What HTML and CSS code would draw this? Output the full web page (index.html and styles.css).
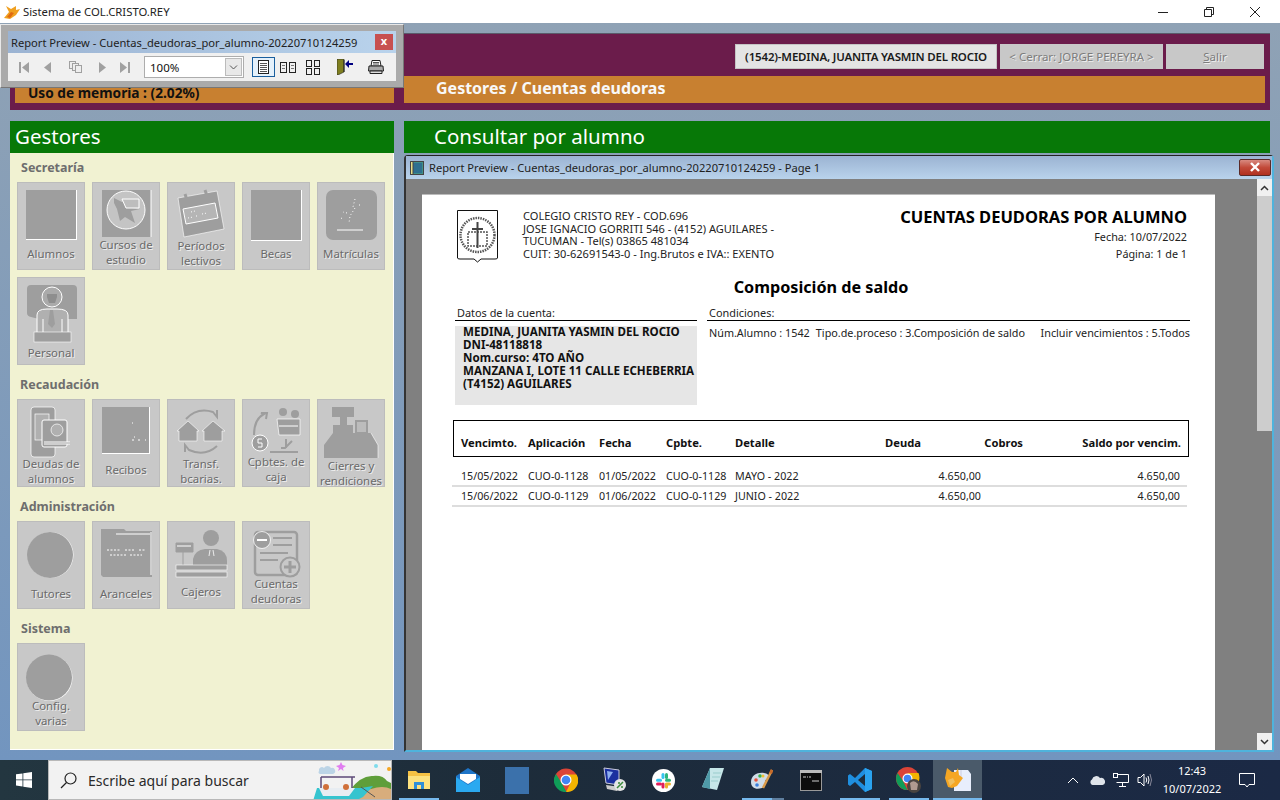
FILE: index.html
```html
<!DOCTYPE html>
<html lang="es">
<head>
<meta charset="UTF-8">
<title>Sistema de COL.CRISTO.REY</title>
<link rel="stylesheet" href="styles.css">
</head>

<body>
  <!-- ============  Window title bar  ============ -->
  <header class="titlebar">
    <svg class="app-icon" width="18" height="18" viewBox="0 0 18 18">
      <path d="M1 15 L6 9 L3 3 L8 6 L13 3 L13 7 L17 6 L13 12 L7 16 Z" fill="#f0a020"/>
      <path d="M4 14 L8 9 L11 10 L7 15 Z" fill="#e06a10"/>
    </svg>
    <span class="app-title">Sistema de COL.CRISTO.REY</span>
    <div class="win-controls">
      <svg width="12" height="12" viewBox="0 0 12 12"><path d="M1 6.5H11" stroke="#222" fill="none"/></svg>
      <svg width="12" height="12" viewBox="0 0 12 12"><path d="M1.5 3.5H8.5V10.5H1.5ZM3.5 3.5V1.5H10.5V8.5H8.5" stroke="#222" fill="none"/></svg>
      <svg width="12" height="12" viewBox="0 0 12 12"><path d="M1 1L11 11M11 1L1 11" stroke="#222" fill="none"/></svg>
    </div>
  </header>

  <!-- ============  Application  ============ -->
  <main class="desktop">
    <section class="top-band">
      <div class="top-buttons">
        <div class="btn btn-user">(1542)-MEDINA, JUANITA YASMIN DEL ROCIO</div>
        <div class="btn btn-close">&lt; Cerrar: JORGE PEREYRA &gt;</div>
        <div class="btn btn-exit"><u>S</u>alir</div>
      </div>
      <div class="top-strips">
        <div class="strip strip-mem">Uso de memoria : (2.02%)</div>
        <div class="strip strip-path">Gestores / Cuentas deudoras</div>
      </div>
    </section>

    <div class="columns">
      <!-- gestores menu -->
      <aside class="menu">
        <h2 class="green-head">Gestores</h2>
        <div class="menu-body">
          <h3 class="group g-sec">Secretaría</h3>
          <div class="tiles">
            <div class="tile">
              <svg width="68" height="64" viewBox="0 0 68 64"><rect x="9" y="8" width="51" height="50" fill="#fff"/><rect x="9" y="8" width="50" height="49" fill="#9e9e9e"/></svg>
              <span>Alumnos</span>
            </div>
            <div class="tile">
              <svg width="68" height="55" viewBox="0 0 68 55"><rect x="10" y="8" width="49" height="47" fill="#9e9e9e"/><path d="M59 8V55" stroke="#fff"/><circle cx="34" cy="28" r="19" fill="#c4c4c4" stroke="#fff"/><path d="M22 16l8 4 8-2 2 8 8 1-9 2 4 12-10-6-5 4-3-12-3-6z" fill="#9e9e9e"/><path d="M30 17h17v9H34z" fill="#bdbdbd" stroke="#fff"/></svg>
              <span>Cursos de<br>estudio</span>
            </div>
            <div class="tile">
              <svg width="68" height="56" viewBox="0 0 68 56"><path d="M11 16L50 9L57 47L17 55Z" fill="#9e9e9e" stroke="#fff" stroke-width=".6"/><path d="M18 12l2 6M38 8l2 6" stroke="#9e9e9e" stroke-width="3"/><path d="M16 27L48 21L51 36L19 42Z" fill="#b5b5b5" stroke="#fff"/><path d="M21 36l5-1M29 34l3 0M35 32l5-1M24 30l4-1" stroke="#fff" stroke-dasharray="1 2"/></svg>
              <span>Períodos<br>lectivos</span>
            </div>
            <div class="tile">
              <svg width="68" height="64" viewBox="0 0 68 64"><rect x="9" y="8" width="51" height="51" fill="#fff"/><rect x="9" y="8" width="50" height="50" fill="#9e9e9e"/></svg>
              <span>Becas</span>
            </div>
            <div class="tile">
              <svg width="68" height="64" viewBox="0 0 68 64"><rect x="9" y="8" width="51" height="50" rx="7" fill="#9e9e9e"/><path d="M20 48H46" stroke="#fff"/><path d="M38 17l-2 8 2 1-5 8-1 7M30 31l-4 -1M42 23l2 0M24 36l2 1" stroke="#fff" stroke-dasharray="1 2.5" fill="none"/></svg>
              <span>Matrículas</span>
            </div>
            <div class="tile">
              <svg width="68" height="68" viewBox="0 0 68 68"><path d="M14 8H56Q60 8 60 12V42L50 42H22L14 40Q10 39 10 36V12Q10 8 14 8Z" fill="#9e9e9e"/><circle cx="35" cy="20" r="10" fill="#aaa" stroke="#fff"/><path d="M30 17h10v3l-2 6h-6l-2-6z" fill="#8e8e8e"/><path d="M20 55V38Q20 32 30 32H40Q51 32 51 38V55" fill="#b0b0b0" stroke="#fff"/><path d="M33 33l-2 14 4 4 3-4-2-14z" fill="#9e9e9e"/><path d="M26 42v13M45 42v13" stroke="#fff"/><rect x="17" y="55" width="37" height="10" fill="#9e9e9e" stroke="#fff" stroke-width=".6"/></svg>
              <span>Personal</span>
            </div>
          </div>

          <h3 class="group g-rec">Recaudación</h3>
          <div class="tiles">
            <div class="tile">
              <svg width="68" height="57" viewBox="0 0 68 57" fill="none"><rect x="14" y="8" width="24" height="50" rx="3" fill="#9e9e9e" stroke="#fff" stroke-width=".7"/><rect x="18" y="15" width="14" height="26" fill="#b0b0b0" stroke="#fff" stroke-width=".7"/><rect x="25" y="21" width="25" height="27" rx="2" fill="#9e9e9e" stroke="#fff"/><circle cx="40" cy="31" r="6" fill="#b0b0b0" stroke="#fff" stroke-width=".7"/><path d="M27 44H53" stroke="#fff" stroke-width="3"/><path d="M27 44H53" stroke="#9e9e9e"/></svg>
              <span>Deudas de<br>alumnos</span>
            </div>
            <div class="tile">
              <svg width="68" height="63" viewBox="0 0 68 63"><rect x="10" y="8" width="48" height="47" fill="#fff"/><rect x="10" y="8" width="47" height="46" fill="#9e9e9e"/><path d="M40 24h1M42 38h1M40 41h2M46 41h2M53 41h1" stroke="#fff"/></svg>
              <span>Recibos</span>
            </div>
            <div class="tile">
              <svg width="68" height="57" viewBox="0 0 68 57"><path d="M19 20Q30 8 46 13l4 5v-7" fill="none" stroke="#9e9e9e" stroke-width="2"/><path d="M50 47Q38 58 22 51l-4-5v7" fill="none" stroke="#9e9e9e" stroke-width="2"/><path d="M10 32L21 22L32 32H30V42H12V32Z" fill="#9e9e9e" stroke="#fff" stroke-width=".6"/><path d="M35 32L46 22L58 32H55V42H37V32Z" fill="#9e9e9e" stroke="#fff" stroke-width=".6"/></svg>
              <span>Transf.<br>bcarias.</span>
            </div>
            <div class="tile">
              <svg width="68" height="55" viewBox="0 0 68 55" fill="none"><path d="M12 36Q12 20 22 15l-3 -1h6l-1 6" stroke="#9e9e9e" stroke-width="2"/><circle cx="18" cy="44" r="8" fill="#9e9e9e" stroke="#fff"/><path d="M20 40h-4v4h4v4h-4" stroke="#fff"/><circle cx="41" cy="13" r="4" fill="#9e9e9e"/><circle cx="53" cy="15" r="4" fill="#9e9e9e"/><path d="M35 20H58V36H37Z" fill="#9e9e9e" stroke="#fff" stroke-width=".7"/><path d="M37 27H56" stroke="#fff"/><path d="M50 42l-7 7h-4M44 40v9" stroke="#9e9e9e" stroke-width="2"/><path d="M28 53H56" stroke="#9e9e9e" stroke-width="2"/></svg>
              <span>Cpbtes. de<br>caja</span>
            </div>
            <div class="tile">
              <svg width="68" height="59" viewBox="0 0 68 59"><path d="M15 8H37V18H30V26H36V34H54L61 46V59H7V46L16 34V26H23V18H15Z" fill="#9e9e9e"/><rect x="39" y="22" width="11" height="12" fill="#bcbcbc" stroke="#9e9e9e" stroke-width="2"/><path d="M54 34L61 46V59" fill="none" stroke="#fff" stroke-width=".6"/></svg>
              <span>Cierres y<br>rendiciones</span>
            </div>
          </div>

          <h3 class="group g-adm">Administración</h3>
          <div class="tiles">
            <div class="tile">
              <svg width="68" height="65" viewBox="0 0 68 65"><circle cx="33.5" cy="34" r="23" fill="#fff"/><circle cx="33" cy="34" r="23" fill="#9e9e9e"/></svg>
              <span>Tutores</span>
            </div>
            <div class="tile">
              <svg width="68" height="65" viewBox="0 0 68 65"><path d="M9 8H32L34 10H60V56H11L9 54Z" fill="#9e9e9e"/><path d="M24 13H58M59 11V54" stroke="#fff"/><path d="M15 29H29M33 29H42M47 29H54M18 34H34M38 34H50" stroke="#fff" stroke-dasharray="2 1.5"/></svg>
              <span>Aranceles</span>
            </div>
            <div class="tile">
              <svg width="68" height="63" viewBox="0 0 68 63"><circle cx="44" cy="17" r="8" fill="#9e9e9e"/><path d="M26 44V38Q28 29 38 28H50Q60 30 60 40V44Z" fill="#9e9e9e"/><path d="M43 29l-1 6M46 29l1 6" stroke="#fff" stroke-width=".8"/><path d="M9 22H26V31H9ZM16 31V44" fill="#9e9e9e" stroke="#9e9e9e"/><path d="M10 25H24" stroke="#fff"/><rect x="9" y="44" width="51" height="5" fill="#9e9e9e" stroke="#fff" stroke-width=".6"/><rect x="9" y="51" width="51" height="5" fill="#9e9e9e" stroke="#fff" stroke-width=".6"/></svg>
              <span>Cajeros</span>
            </div>
            <div class="tile">
              <svg width="68" height="55" viewBox="0 0 68 55" fill="none"><rect x="13" y="11" width="42" height="43" rx="3" stroke="#9e9e9e" stroke-width="2.5"/><circle cx="20" cy="19" r="8.5" fill="#9e9e9e" stroke="#fff" stroke-width=".8"/><path d="M15 19H25" stroke="#fff" stroke-width="2"/><path d="M31 17H50M31 24H50M18 32H46M18 39H36" stroke="#9e9e9e" stroke-width="2"/><circle cx="48" cy="46" r="9.5" fill="#c8c8c8" stroke="#9e9e9e" stroke-width="2"/><path d="M42 46H54M48 40V52" stroke="#9e9e9e" stroke-width="3"/></svg>
              <span>Cuentas<br>deudoras</span>
            </div>
          </div>

          <h3 class="group g-sis">Sistema</h3>
          <div class="tiles">
            <div class="tile">
              <svg width="68" height="55" viewBox="0 0 68 55"><circle cx="32.5" cy="35" r="23" fill="#fff"/><circle cx="32" cy="34.500" r="23" fill="#9e9e9e"/></svg>
              <span>Config.<br>varias</span>
            </div>
          </div>
        </div>
      </aside>

      <div class="consult">
        <h2 class="green-head consult-head">Consultar por alumno</h2>
      </div>
    </div>
  </main>

  <!-- ============  Report window (page)  ============ -->
  <section class="report-win">
    <div class="report-title">
      <svg width="14" height="14" viewBox="0 0 14 14"><rect x=".5" y=".5" width="13" height="13" fill="#3f8f88" stroke="#444"/><rect x="3" y="2" width="9" height="10" fill="#2e6f8f"/><path d="M.5 .5H3V13.500H.5Z" fill="#e6e08a" stroke="#444"/></svg>
      <span>Report Preview - Cuentas_deudoras_por_alumno-20220710124259 - Page 1</span>
      <div class="report-close">
        <svg width="14" height="10" viewBox="0 0 14 10"><path d="M3 1L11 9M11 1L3 9" stroke="#fff" stroke-width="2.400"/></svg>
      </div>
    </div>
    <div class="report-client">
      <div class="page">
        <div class="page-head">
          <svg class="crest" width="42" height="53" viewBox="0 0 42 53" fill="none">
            <path d="M.5 .5H40.500V48Q40.500 49 38 49H24L20.500 52L17 49H3Q.5 49 .5 48Z" fill="#fff" stroke="#111"/>
            <circle cx="20.500" cy="25" r="17" stroke="#555" stroke-width="2.500" stroke-dasharray="1.500 1"/>
            <rect x="11" y="22" width="19" height="14" stroke="#555" stroke-width="1.500" stroke-dasharray="2 1"/>
            <path d="M20.500 12V38M15 19H26" stroke="#444" stroke-width="2"/>
          </svg>
          <div class="school">
            COLEGIO CRISTO REY - COD.696<br>
            JOSE IGNACIO GORRITI 546 - (4152) AGUILARES -<br>
            TUCUMAN - Tel(s) 03865 481034<br>
            CUIT: 30-62691543-0 - Ing.Brutos e IVA:: EXENTO
          </div>
          <div class="doc-info">
            <div class="doc-title">CUENTAS DEUDORAS POR ALUMNO</div>
            <div class="doc-date">Fecha: 10/07/2022</div>
            <div class="doc-num">Página: 1 de 1</div>
          </div>
        </div>

        <div class="doc-sub">Composición de saldo</div>

        <div class="data-cols">
          <div class="data-left">
            <div class="data-label">Datos de la cuenta:</div>
            <div class="account">
              MEDINA, JUANITA YASMIN DEL ROCIO<br>
              DNI-48118818<br>
              Nom.curso: 4TO AÑO<br>
              MANZANA I, LOTE 11 CALLE ECHEBERRIA<br>
              (T4152) AGUILARES
            </div>
          </div>
          <div class="data-right">
            <div class="data-label">Condiciones:</div>
            <div class="conds">
              <span>Núm.Alumno : 1542</span>
              <span>Tipo.de.proceso : 3.Composición de saldo</span>
              <span>Incluir vencimientos : 5.Todos</span>
            </div>
          </div>
        </div>

        <div class="t-head">
          <span>Vencimto.</span><span>Aplicación</span><span>Fecha</span><span>Cpbte.</span><span>Detalle</span>
          <span class="num">Deuda</span><span class="num">Cobros</span><span class="num">Saldo por vencim.</span>
        </div>
        <div class="t-row first">
          <span>15/05/2022</span><span>CUO-0-1128</span><span>01/05/2022</span><span>CUO-0-1128</span><span>MAYO - 2022</span>
          <span class="num">4.650,00</span><span class="num"></span><span class="num">4.650,00</span>
        </div>
        <div class="t-row">
          <span>15/06/2022</span><span>CUO-0-1129</span><span>01/06/2022</span><span>CUO-0-1129</span><span>JUNIO - 2022</span>
          <span class="num">4.650,00</span><span class="num"></span><span class="num">4.650,00</span>
        </div>
      </div>
      <div class="vscroll">
        <div class="arrow"><svg width="9" height="6" viewBox="0 0 9 6"><path d="M1 5L4.500 1.500L8 5" stroke="#333" stroke-width="1.500" fill="none"/></svg></div>
        <div class="thumb"></div>
        <div class="track"></div>
        <div class="arrow"><svg width="9" height="6" viewBox="0 0 9 6"><path d="M1 1L4.500 4.500L8 1" stroke="#333" stroke-width="1.500" fill="none"/></svg></div>
      </div>
    </div>
  </section>

  <!-- ============  Floating toolbar window  ============ -->
  <section class="tool-win">
    <div class="tool-title">
      <span>Report Preview - Cuentas_deudoras_por_alumno-20220710124259</span>
      <div class="tool-close">x</div>
    </div>
    <div class="tool-bar">
      <svg class="t-first" width="10" height="11" viewBox="0 0 10 11"><path d="M0 0H2V11H0ZM10 0V11L3 5.500Z" fill="#a0a0a0"/></svg>
      <svg class="t-prev" width="7" height="11" viewBox="0 0 7 11"><path d="M7 0V11L0 5.500Z" fill="#a0a0a0"/></svg>
      <svg class="t-pages" width="13" height="12" viewBox="0 0 13 12" fill="#eee" stroke="#a0a0a0"><rect x=".5" y=".5" width="6" height="7"/><rect x="3.500" y="2.500" width="6" height="7"/><rect x="6.500" y="4.500" width="6" height="7"/></svg>
      <svg class="t-next" width="7" height="11" viewBox="0 0 7 11"><path d="M0 0V11L7 5.500Z" fill="#a0a0a0"/></svg>
      <svg class="t-last" width="10" height="11" viewBox="0 0 10 11"><path d="M8 0H10V11H8ZM0 0V11L7 5.500Z" fill="#a0a0a0"/></svg>
      <div class="combo">
        <span>100%</span>
        <div class="combo-btn"><svg width="9" height="5" viewBox="0 0 9 5"><path d="M1 .5L4.500 4L8 .5" stroke="#555" fill="none"/></svg></div>
      </div>
      <div class="view-on">
        <svg width="11" height="14" viewBox="0 0 11 14" fill="none" stroke="#222"><rect x=".5" y=".5" width="10" height="13" fill="#fff"/><path d="M2 3.500H9M2 5.500H9M2 7.500H9M2 9.500H9M2 11.500H9" stroke="#555"/></svg>
      </div>
      <svg class="t-two" width="16" height="11" viewBox="0 0 16 11" fill="none" stroke="#222"><rect x=".5" y=".5" width="6" height="10"/><rect x="9.500" y=".5" width="6" height="10"/><path d="M2 3.500H5M2 6.500H5M11 3.500H14M11 6.500H14" stroke="#777"/></svg>
      <svg class="t-four" width="14" height="15" viewBox="0 0 14 15" fill="none" stroke="#222"><rect x=".5" y=".5" width="5" height="6"/><rect x="8.500" y=".5" width="5" height="6"/><rect x=".5" y="8.500" width="5" height="6"/><rect x="8.500" y="8.500" width="5" height="6"/></svg>
      <svg class="t-exit" width="16" height="16" viewBox="0 0 16 16"><path d="M0 0H7V13L1 16H0Z" fill="#7f7f20" stroke="#222" stroke-width=".6"/><path d="M7 1V13" stroke="#222"/><path d="M16 4H12V1L8 5L12 9V6H16Z" fill="#000080"/></svg>
      <svg class="t-print" width="16" height="14" viewBox="0 0 16 14"><path d="M4 .5H12L13 6H3Z" fill="#fff" stroke="#222"/><path d="M1 6H15L15.500 11H.5Z" fill="#aaa" stroke="#222"/><path d="M2 11H14V13.500H2Z" fill="#ddd" stroke="#222"/><path d="M5 2.500H11M5 4H11" stroke="#555"/></svg>
    </div>
  </section>

  <!-- ============  Windows taskbar  ============ -->
  <footer class="taskbar">
    <div class="start">
      <svg width="16" height="16" viewBox="0 0 16 16" fill="#fff"><path d="M0 2.300L6.500 1.400V7.500H0ZM7.300 1.300L16 0V7.500H7.300ZM0 8.300H6.500V14.500L0 13.600ZM7.300 8.300H16V16L7.300 14.700Z"/></svg>
    </div>
    <div class="search">
      <svg width="17" height="17" viewBox="0 0 17 17" fill="none" stroke="#222" stroke-width="1.200"><circle cx="10.500" cy="6.500" r="5.500"/><path d="M6.500 10.500L1 16"/></svg>
      <span>Escribe aquí para buscar</span>
      <svg class="doodle" width="80" height="40" viewBox="0 0 80 40">
        <path d="M8 10a3 3 0 0 1 5-3a4 4 0 0 1 7 0a3 3 0 0 1 2 6H9a2 2 0 0 1-1-3Z" fill="#bcd4e6"/>
        <path d="M30 1l1.500 3 3.500 1-3 2 .5 3-2.500-2-3 2 1-3-3-2 3.500-1Z" fill="#e07df0"/>
        <circle cx="65" cy="5" r="2" fill="#7fdcec"/><circle cx="78" cy="8" r="2" fill="#f5a623"/>
        <path d="M38 30Q50 14 62 15Q72 14 76 20L80 22V40H30Z" fill="#5f9e3a"/>
        <path d="M24 40Q50 30 60 28Q72 24 80 28V40Z" fill="#d8ad7c"/>
        <path d="M2 40L6 27H50L62 25L52 36L44 40Z" fill="#35c4cf"/>
        <path d="M8 27H44L38 35H12Z" fill="#e8edf2"/>
        <path d="M10 16H44M10 16V27M41 16V27" stroke="#5d4a78" stroke-width="1.500" fill="none"/>
        <circle cx="15" cy="26" r="3" fill="#d0703a"/><circle cx="35" cy="26" r="3" fill="#d0703a"/>
        <path d="M50 26L64 36" stroke="#555" stroke-width="1"/>
      </svg>
    </div>
    <div class="task-icons">
      <div class="ti run">
        <svg width="22" height="20" viewBox="0 0 22 20"><path d="M0 1H8L10 3H22V19H0Z" fill="#f6c244"/><path d="M0 6H22V19H0Z" fill="#fde27f"/><path d="M6 19V12H16V19Z" fill="#2f8fd8"/><path d="M9 19V15H13V19Z" fill="#fde27f"/></svg>
      </div>
      <div class="ti">
        <svg width="24" height="24" viewBox="0 0 24 24"><path d="M0 8L12 0L24 8V24H0Z" fill="#1e75c8"/><path d="M0 9L12 17L24 9V24H0Z" fill="#2ba9f0"/><path d="M4 6H20V11L12 16L4 11Z" fill="#fff"/></svg>
      </div>
      <div class="ti"><div class="blue-sq"></div></div>
      <div class="ti">
        <svg width="24" height="24" viewBox="0 0 24 24"><circle cx="12" cy="12" r="11.500" fill="#db4437"/><path d="M12 24A11.500 11.500 0 0 1 2 6L7 14L12 23Z" fill="#0f9d58"/><path d="M12 6.500H22.500A11.500 11.500 0 0 1 12 24L17 14Z" fill="#f4b400"/><circle cx="12" cy="12" r="5.500" fill="#fff"/><circle cx="12" cy="12" r="4.300" fill="#4285f4"/></svg>
      </div>
      <div class="ti">
        <svg width="24" height="26" viewBox="0 0 24 26"><path d="M1 1L16 3V18L3 16Z" fill="#1a2fa0" stroke="#ccd" /><path d="M4 4L10 5L5 13Z" fill="#8fb0f0"/><path d="M3 18L17 20L14 24L4 22Z" fill="#ccc"/><circle cx="17" cy="18" r="6" fill="#e6e6e6"/><path d="M14 21L20 15M15 16h2M18 20h2" stroke="#3a8a3a" stroke-width="1.500"/></svg>
      </div>
      <div class="ti">
        <svg width="23" height="23" viewBox="0 0 23 23"><circle cx="11.500" cy="11.500" r="11.500" fill="#fff"/><rect x="9.500" y="4" width="3" height="6" rx="1.500" fill="#36c5f0"/><rect x="4" y="9.800" width="6" height="3" rx="1.500" fill="#36c5f0"/><rect x="13" y="4" width="3" height="6" rx="1.500" fill="#2eb67d"/><rect x="13" y="9.800" width="6" height="3" rx="1.500" fill="#2eb67d"/><rect x="4" y="13.500" width="6" height="3" rx="1.500" fill="#e01e5a"/><rect x="9.500" y="13.500" width="3" height="6" rx="1.500" fill="#e01e5a"/><rect x="13" y="13.500" width="6" height="3" rx="1.500" fill="#ecb22e"/><rect x="13" y="14" width="3" height="5.500" rx="1.500" fill="#ecb22e"/></svg>
      </div>
      <div class="ti">
        <svg width="22" height="26" viewBox="0 0 22 26"><path d="M8 1H22L15 23L0 20Z" fill="#c6e6e8"/><path d="M8 1L0 20L8 22Z" fill="#4f9aa8"/><path d="M11 6H19M10 10H18M9 14H16" stroke="#9cc" /></svg>
      </div>
      <div class="ti run-split">
        <svg width="24" height="24" viewBox="0 0 24 24"><path d="M1 14C1 7 8 4 14 5C20 6 20 10 17 11C13 12 18 18 12 20C6 22 1 20 1 14Z" fill="#cfdce8"/><circle cx="6" cy="12" r="1.800" fill="#e8503a"/><circle cx="10" cy="8" r="1.800" fill="#3cb04a"/><circle cx="7" cy="17" r="1.800" fill="#3a7fdc"/><circle cx="13" cy="8" r="1.500" fill="#f0c030"/><path d="M13 20L22 2" stroke="#d99a4a" stroke-width="2.500"/><path d="M21 1L23 3L22 6L19 5Z" fill="#c86a2a"/></svg>
      </div>
      <div class="ti">
        <svg width="22" height="21" viewBox="0 0 22 21"><rect x=".5" y=".5" width="21" height="20" fill="#0c0c0c" stroke="#999"/><path d="M0 0H22V3H0Z" fill="#bbb"/><path d="M3 7h3M7 7h1M9 7h2M12 11h7" stroke="#ccc" stroke-width="1.200"/></svg>
      </div>
      <div class="ti run">
        <svg width="24" height="24" viewBox="0 0 24 24"><path d="M17 0L24 3V21L17 24L7 14L2 18L0 16.500V7.500L2 6L7 10Z" fill="#1f8fe0"/><path d="M17 6L10 12L17 18Z" fill="#1d2c3a"/><path d="M17 0L24 3V21L17 24Z" fill="#2aa3f0"/></svg>
      </div>
      <div class="ti run">
        <svg width="26" height="26" viewBox="0 0 26 26"><circle cx="11.500" cy="11.500" r="11.500" fill="#db4437"/><path d="M11.500 23A11.500 11.500 0 0 1 1.500 6L7 14Z" fill="#0f9d58"/><path d="M11.500 6H22.500A11.500 11.500 0 0 1 14 22L17 13Z" fill="#f4b400"/><circle cx="11.500" cy="11.500" r="5" fill="#fff"/><circle cx="11.500" cy="11.500" r="3.800" fill="#4285f4"/><circle cx="18" cy="19" r="7" fill="#4a4440"/><path d="M14 16Q18 12 22 17L21 23L15 23Z" fill="#b09a90"/></svg>
      </div>
      <div class="ti active">
        <svg width="26" height="26" viewBox="0 0 26 26"><path d="M9 3H23L26 7V24H9Z" fill="#e8eefc"/><path d="M16 3V12" stroke="#ccd"/><path d="M0 11L2 1L7 5L11 5L13 1L14 8L18 11L12 19L7 21L3 20Z" fill="#f5a623"/><path d="M3 13L8 11L10 15L5 19Z" fill="#f0c060"/></svg>
      </div>
    </div>
    <div class="tray">
      <svg class="chevron" width="12" height="7" viewBox="0 0 12 7"><path d="M1 6L6 1L11 6" stroke="#fff" fill="none"/></svg>
      <svg class="cloud" width="16" height="10" viewBox="0 0 16 10"><path d="M3.500 10A3 3 0 0 1 3 4.500A4.500 4.500 0 0 1 11 3A3.500 3.500 0 0 1 13.500 10Z" fill="#dfe4ea"/></svg>
      <svg class="net" width="16" height="14" viewBox="0 0 16 14" fill="none" stroke="#fff"><path d="M3.500 1.500H15.500V9.500H3.500M9.500 9.500V13M6 13.500H13"/><rect x=".5" y=".5" width="4" height="4" fill="#1b2a44"/></svg>
      <svg class="vol" width="16" height="14" viewBox="0 0 16 14" fill="none" stroke="#fff"><path d="M1 4.500H3.500L7 1V13L3.500 9.500H1Z"/><path d="M9 4.500Q10.500 7 9 9.500M11 3Q13 7 11 11"/><path d="M13 1Q16 7 13 13" stroke="#889"/></svg>
    </div>
    <div class="clock">12:43<br>10/07/2022</div>
    <div class="notify">
      <svg width="16" height="15" viewBox="0 0 16 15"><path d="M.5 .5H15.500V11.500H10L8 14L6 11.500H.5Z" stroke="#fff" fill="none"/></svg>
    </div>
  </footer>
</body>
</html>
```

FILE: styles.css
```css
/* page layout */
html, body{ margin:0; padding:0 }
body{
  width:1280px;
  height:800px;
  overflow:hidden;
  display:flex;
  flex-direction:column;
  position:relative;
  font-family:"Noto Sans", sans-serif;
  color:#111;
}
h2, h3{ margin:0; font-weight:normal }

/* title bar */
.titlebar{
  height:23px;
  background:#fff;
  display:flex;
  align-items:center;
  padding-left:3px;
  flex:none;
}
.app-title{ font-size:11.300px; margin-left:2px; color:#222 }
.win-controls{
  margin-left:auto;
  display:flex;
  gap:34px;
  padding-right:19px;
}

/* desktop background */
.desktop{
  flex:1;
  padding:10px 10px 10px;
  background:linear-gradient(#8fa2b5, #7295bf);
  display:flex;
  flex-direction:column;
  min-height:0;
}
.top-band{
  height:77px;
  flex:none;
  background:#6b1c4b;
  border-top:1px solid #5a5a6a;
  box-sizing:border-box;
  padding-top:10px;
}
.top-buttons{
  display:flex;
  justify-content:flex-end;
  gap:3px;
  padding-right:6px;
  height:25px;
}
.btn{
  background:#c8c8c8;
  font-size:11.500px;
  display:flex;
  align-items:center;
  justify-content:center;
  box-sizing:border-box;
}
.btn-user{
  width:262px;
  background:#e4e4e4;
  border:1px solid #c4c4c4;
  font-weight:600;
  letter-spacing:-.17px;
  color:#1a1a1a;
}
.btn-close{ width:163px; color:#7c7c7c; text-shadow:1px 1px 0 #eee }
.btn-exit{ width:98px; color:#7c7c7c; text-shadow:1px 1px 0 #eee }
.top-strips{
  margin-top:7px;
  display:flex;
  gap:10px;
  padding:0 5px;
}
.strip{
  background:#c88030;
  height:27px;
  display:flex;
  align-items:center;
  font-weight:bold;
}
.strip-mem{ width:379px; padding-left:13px; box-sizing:border-box; font-size:13.700px; padding-top:6px }
.strip-path{ flex:1; padding-left:32px; padding-bottom:3px; box-sizing:border-box; color:#f8f8f8; font-size:16px }

/* two columns */
.columns{
  flex:1;
  display:flex;
  gap:10px;
  margin-top:11px;
  min-height:0;
}
.green-head{
  background:#077807;
  color:#fff;
  height:32px;
  line-height:31px;
  font-size:20.500px;
  padding-left:5px;
}
.menu{ width:384px; display:flex; flex-direction:column }
.menu-body{
  flex:1;
  background:#f1f2d2;
  border-right:1px solid #fff;
  border-bottom:1px solid #fff;
  padding:7px 0 0 7px;
}
.consult{ flex:1 }
.consult-head{ padding-left:30px }

/* menu groups & tiles */
.group{
  font-size:12.500px;
  font-weight:bold;
  color:#6e6e6e;
  height:15px;
  line-height:15px;
  padding-left:4px;
  margin-bottom:7px;
}
.g-rec, .g-adm{ padding-left:3px }
.g-rec{ margin-top:12px }
.g-adm{ margin-top:12px }
.g-sis{ margin-top:12px }
.tiles{
  display:grid;
  grid-template-columns:repeat(5, 68px);
  grid-auto-rows:88px;
  gap:7px;
}
.tile{
  background:#c8c8c8;
  box-shadow:inset 0 0 0 1px #bcbcbc;
  text-align:center;
  font-size:11.400px;
  line-height:15px;
  color:#6a6a6a;
  text-shadow:1px 1px 0 #eee;
}
.tile svg{ display:block; overflow:visible }
.tile span{ display:block; position:relative; white-space:nowrap }

/* report window */
.report-win{
  position:absolute;
  left:404px;
  top:155px;
  width:870px;
  height:597px;
  box-sizing:border-box;
  border:2px solid #4fb3dc;
  border-left-color:#333;
  border-top:1px solid #222;
  border-radius:4px 4px 0 0;
  display:flex;
  flex-direction:column;
  background:#808080;
}
.report-title{
  height:23px;
  flex:none;
  background:linear-gradient(#9bb3d2, #b9d3ec);
  display:flex;
  align-items:center;
  padding-left:4px;
  font-size:11.150px;
  color:#222;
  gap:5px;
}
.report-close{
  margin-left:auto;
  margin-right:1px;
  width:32px;
  height:17px;
  margin-top:-1px;
  background:linear-gradient(#d88a80, #c24a3a 50%, #b03020);
  border:1px solid #5a2a28;
  border-radius:2px;
  box-sizing:border-box;
  display:flex;
  align-items:center;
  justify-content:center;
}
.report-client{
  flex:1;
  display:flex;
  justify-content:space-between;
  min-height:0;
  padding-top:15px;
  padding-left:16px;
  background:#808080;
}
.page{
  width:793px;
  background:#fff;
  box-sizing:border-box;
  padding:17px 0 0 30px;
  border-top:1px solid #bbb;
  margin-bottom:0;
}
.vscroll{
  width:15px;
  margin-top:-15px;
  background:#ccc;
  display:flex;
  flex-direction:column;
}
.arrow{
  height:17px;
  background:#f0f0f0;
  display:flex;
  align-items:center;
  justify-content:center;
  flex:none;
}
.thumb{ height:235px; background:#cdcdcd; flex:none }
.track{ flex:1; background:#808080 }

/* report page */
.page-head{ display:flex; height:72px; color:#222 }
.crest{ margin-left:5px; flex:none; margin-top:-2px }
.school{
  margin-left:24px;
  margin-top:-2px;
  font-size:11.050px;
  line-height:12.700px;
  white-space:nowrap;
}
.doc-info{
  margin-left:auto;
  margin-right:28px;
  margin-top:-3px;
  text-align:right;
  white-space:nowrap;
}
.doc-title{ font-size:16.500px; font-weight:bold; line-height:16px; color:#000 }
.doc-date{ font-size:10.800px; line-height:14px; margin-top:5px }
.doc-num{ font-size:10.800px; line-height:14px; margin-top:3px }
.doc-sub{
  text-align:center;
  font-size:16.200px;
  font-weight:bold;
  color:#000;
  line-height:22px;
  margin-left:-30px;
  margin-top:-8px;
  height:31px;
  padding-left:5px;
}
.data-cols{ display:flex; gap:10px; height:92px; margin-left:3px; margin-top:0 }
.data-left{ width:242px }
.data-right{ width:483px }
.data-label{
  font-size:10.900px;
  line-height:12px;
  height:13px;
  padding-left:2px;
  border-bottom:1px solid #000;
  color:#222;
}
.account{
  margin-top:5px;
  height:79px;
  box-sizing:border-box;
  background:#e6e6e6;
  padding:0 0 0 8px;
  font-size:11.600px;
  line-height:12.900px;
  font-weight:bold;
  white-space:nowrap;
}
.conds{
  display:flex;
  font-size:10.800px;
  line-height:13px;
  margin-top:5px;
  padding-left:2px;
  white-space:nowrap;
  color:#222;
}
.conds span:nth-child(1){ width:107px }
.conds span:nth-child(2){ width:225px }

/* table */
.t-head{
  margin-top:21px;
  margin-left:1px;
  width:736px;
  height:37px;
  box-sizing:border-box;
  border:1px solid #000;
  padding:14px 7px 0 7px;
  display:grid;
  grid-template-columns:67px 71px 67px 69px 100px 86px 102px 158px;
  font-size:11.200px;
  line-height:16px;
  font-weight:bold;
  color:#111;
  white-space:nowrap;
}
.t-row{
  width:735px;
  height:20px;
  box-sizing:border-box;
  margin-left:0;
  padding:0 0 0 9px;
  border-bottom:2px solid #ddd;
  display:grid;
  grid-template-columns:67px 71px 67px 69px 150px 96px 0 199px;
  font-size:10.700px;
  line-height:18px;
  color:#222;
  white-space:nowrap;
}
.t-row.first{ margin-top:10px }
.num{ text-align:right }

/* floating toolbar window */
.tool-win{
  position:absolute;
  left:0;
  top:24px;
  width:404px;
  height:64px;
  box-sizing:border-box;
  background:#aaa;
  border:1px solid #e8e8e8;
  border-right-color:#777;
  border-bottom-color:#777;
  padding:6px;
}
.tool-title{
  height:22px;
  background:linear-gradient(90deg, #9bb3d2, #b9d3ec);
  display:flex;
  align-items:center;
  padding-left:3px;
  font-size:11.150px;
  color:#222;
  margin:0 1px;
}
.tool-close{
  margin-left:auto;
  margin-right:3px;
  width:18px;
  height:16px;
  background:#c75050;
  color:#fff;
  font-size:11px;
  font-weight:bold;
  line-height:14px;
  text-align:center;
}
.tool-bar{
  height:28px;
  background:#f0f0f0;
  margin:0 1px;
  display:flex;
  align-items:center;
}
.t-first{ margin-left:11px }
.t-prev{ margin-left:15px }
.t-pages{ margin-left:18px }
.t-next{ margin-left:17px }
.t-last{ margin-left:14px }
.combo{
  margin-left:14px;
  width:100px;
  height:22px;
  box-sizing:border-box;
  border:1px solid #adadad;
  background:#fff;
  display:flex;
  align-items:center;
  padding-left:5px;
  font-size:11.500px;
}
.combo-btn{
  margin-left:auto;
  width:17px;
  height:18px;
  margin-right:1px;
  background:#e8e8e8;
  border:1px solid #bbb;
  box-sizing:border-box;
  display:flex;
  align-items:center;
  justify-content:center;
}
.view-on{
  margin-left:8px;
  width:23px;
  height:20px;
  box-sizing:border-box;
  border:1px solid #1a5f9e;
  background:#e5f1fb;
  display:flex;
  align-items:center;
  justify-content:center;
}
.t-two{ margin-left:5px }
.t-four{ margin-left:10px }
.t-exit{ margin-left:17px }
.t-print{ margin-left:15px }

/* taskbar */
.taskbar{
  height:40px;
  flex:none;
  background:linear-gradient(90deg, #233640, #1d2c3a 40%, #1b2945);
  display:flex;
  align-items:center;
  color:#fff;
}
.start{
  width:48px;
  display:flex;
  justify-content:center;
}
.search{
  width:344px;
  height:40px;
  box-sizing:border-box;
  background:#f2f2f2;
  border:1px solid #b8b8b8;
  border-bottom-width:1px;
  display:flex;
  align-items:center;
  padding-left:11px;
  color:#2a2a2a;
  font-size:14px;
  gap:11px;
  position:relative;
  overflow:hidden;
}
.doodle{ position:absolute; right:0; top:0 }
.task-icons{ display:flex; margin-left:2px }
.ti{
  width:49px;
  height:40px;
  display:flex;
  align-items:center;
  justify-content:center;
  box-sizing:border-box;
}
.ti.run{ background:linear-gradient(#76b9ed, #76b9ed) center bottom / 40px 2px no-repeat }
.ti.run-split{ background:linear-gradient(90deg, transparent 5px, #76b9ed 5px, #76b9ed 35px, #5f7f9f 35px, #5f7f9f 47px, transparent 47px) center bottom / 100% 2px no-repeat }
.ti.active{ background:#4a5a6a; box-shadow:inset 0 -2px 0 #76b9ed }
.blue-sq{ width:24px; height:27px; background:#3b71ab }
.tray{
  margin-left:auto;
  display:flex;
  align-items:center;
  gap:8px;
}
.chevron{ margin-right:2px }
.clock{
  width:68px;
  margin-left:5px;
  text-align:center;
  font-size:11px;
  line-height:18px;
}
.notify{
  width:54px;
  display:flex;
  justify-content:center;
  padding-right:12px;
  box-sizing:border-box;
}
```
